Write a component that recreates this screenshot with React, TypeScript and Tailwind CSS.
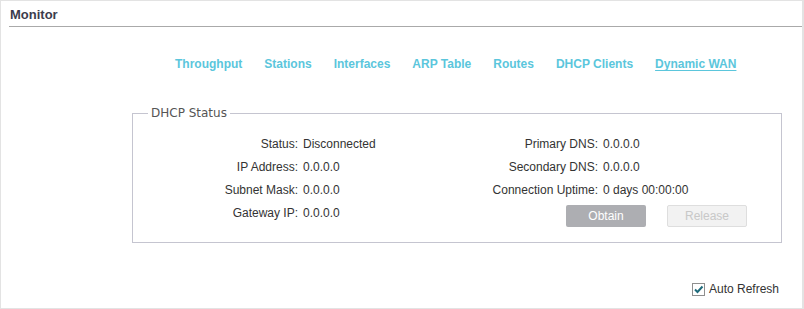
import React from "react";

const links = ["Throughput", "Stations", "Interfaces", "ARP Table", "Routes", "DHCP Clients", "Dynamic WAN"];

function Row({ label, value }: { label: string; value: string }) {
  return (
    <div className="flex h-[23px] items-center">
      <span className="w-[165px] text-right">{label}</span>
      <span className="ml-[5px]">{value}</span>
    </div>
  );
}

export default function App() {
  return (
    <div
      className="w-[804px] h-[309px] border border-[#e3e3e3] border-r-2 bg-white text-[12px] text-[#333]"
      style={{ fontFamily: '"Liberation Sans", Arial, sans-serif' }}
    >
      <div className="ml-[8px] h-[26px] border-b border-[#aaaaaa] flex items-center pt-[2px]">
        <span className="pl-[1px] text-[13px] font-bold text-[#3c3c4c]">Monitor</span>
      </div>

      <div className="flex h-[14px] mt-[30px] pl-[174px] gap-[22px] text-[12px] font-bold text-[#5bc6dc] leading-[14px]">
        {links.map((l) => (
          <span key={l} className={l === "Dynamic WAN" ? "underline underline-offset-2" : ""}>
            {l}
          </span>
        ))}
      </div>

      <fieldset className="ml-[131px] mt-[35px] w-[650px] h-[137px] border border-[#c5c5d0] p-0">
        <legend
          className="ml-[15px] px-[3px] text-[12px] leading-[14px] text-[#555]"
          style={{ fontFamily: '"DejaVu Sans", Verdana, sans-serif' }}
        >
          DHCP Status
        </legend>
        <div className="flex pt-[12px]">
          <div className="w-[300px]">
            <Row label="Status:" value="Disconnected" />
            <Row label="IP Address:" value="0.0.0.0" />
            <Row label="Subnet Mask:" value="0.0.0.0" />
            <Row label="Gateway IP:" value="0.0.0.0" />
          </div>
          <div className="flex-1">
            <Row label="Primary DNS:" value="0.0.0.0" />
            <Row label="Secondary DNS:" value="0.0.0.0" />
            <Row label="Connection Uptime:" value="0 days 00:00:00" />
            <div className="flex gap-[21px] pl-[133px] mt-[4px]">
              <button className="w-[80px] h-[22px] rounded-[2px] bg-[#adaeb2] text-white text-[12px]">
                Obtain
              </button>
              <button className="w-[80px] h-[22px] rounded-[2px] bg-[#f2f2f2] border border-[#dedede] text-[#c8c8c8] text-[12px]">
                Release
              </button>
            </div>
          </div>
        </div>
      </fieldset>

      <div className="flex justify-end items-center mt-[37px] pr-[23px]">
        <span className="w-[13px] h-[13px] border border-[#8f8f8f] bg-white flex items-center justify-center">
          <svg width="11" height="11" viewBox="0 0 11 11">
            <path d="M2 5.5 L4.5 8 L9.5 2.5" fill="none" stroke="#1e6b7b" strokeWidth="2" />
          </svg>
        </span>
        <span className="ml-[4px]">Auto Refresh</span>
      </div>
    </div>
  );
}
